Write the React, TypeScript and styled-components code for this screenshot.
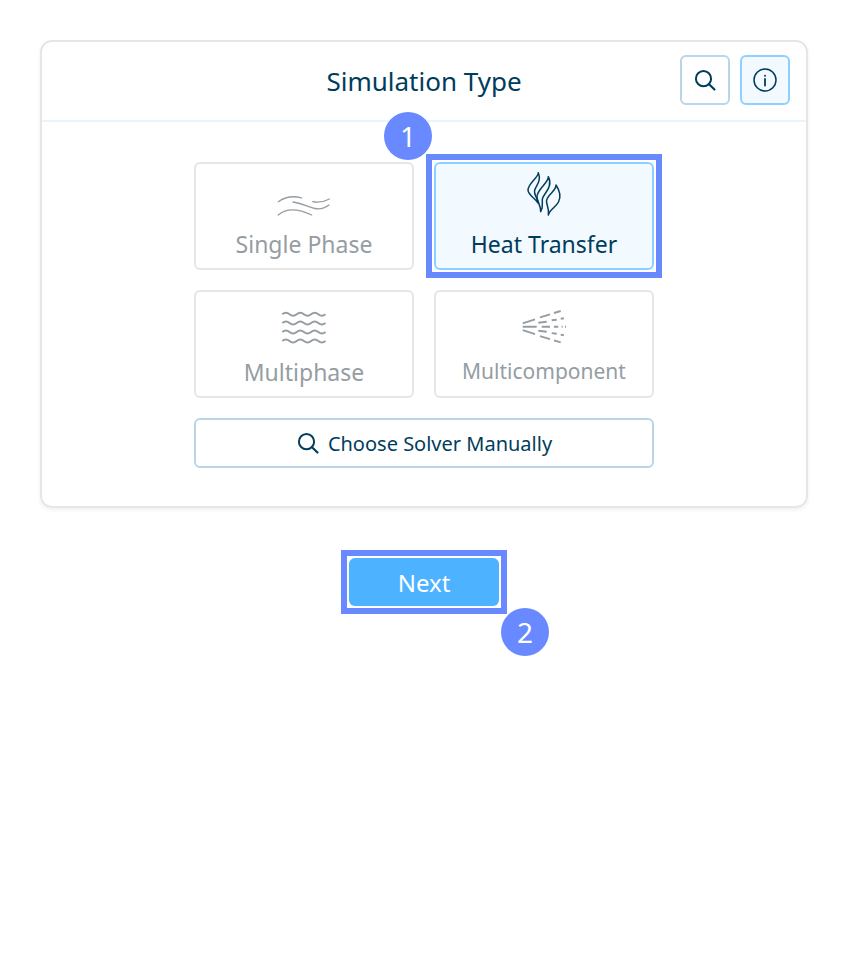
import React from "react";
import styled, { createGlobalStyle } from "styled-components";

const Global = createGlobalStyle`
  html, body { margin: 0; padding: 0; background: #fff; }
  body { font-family: "Noto Sans", "Open Sans", sans-serif; color: #003d5c; }
  * { box-sizing: border-box; }
`;

const Page = styled.div`
  width: 848px;
  min-height: 980px;
  padding: 40px;
  display: flex;
  flex-direction: column;
  align-items: center;
`;

const Card = styled.section`
  width: 768px;
  height: 468px;
  flex: none;
  border: 2px solid #e6e6e6;
  border-radius: 12px;
  box-shadow: 0 2px 4px rgba(0, 0, 0, 0.06);
  display: flex;
  flex-direction: column;
`;

const Header = styled.header`
  height: 80px;
  flex: none;
  padding: 13px 16px 0;
  border-bottom: 2px solid #e6f4fd;
  position: relative;
  display: flex;
  justify-content: flex-end;
  gap: 10px;
`;

const Title = styled.h1`
  position: absolute;
  left: 0;
  right: 0;
  top: 21px;
  margin: 0;
  text-align: center;
  font-size: 26px;
  line-height: 36px;
  font-weight: 400;
  color: #003d5c;
`;

const IconButton = styled.button<{ $active?: boolean }>`
  width: 50px;
  height: 50px;
  padding: 0;
  border: 2px solid ${(p) => (p.$active ? "#8ed0ff" : "#b9d5e6")};
  border-radius: 6px;
  background: ${(p) => (p.$active ? "#f2f9ff" : "#fff")};
  color: #003d5c;
  display: flex;
  align-items: center;
  justify-content: center;
`;

const Body = styled.div`
  padding-top: 40px;
  display: grid;
  grid-template-columns: 220px 220px;
  grid-template-rows: 108px 108px 50px;
  gap: 20px;
  justify-content: center;
`;

const Tile = styled.button<{ $active?: boolean }>`
  position: relative;
  width: 220px;
  height: 108px;
  padding: 8px 0 0;
  border: 2px solid ${(p) => (p.$active ? "#8ed0ff" : "#e6e6e6")};
  border-radius: 6px;
  background: ${(p) => (p.$active ? "#f2f9ff" : "#fff")};
  color: ${(p) => (p.$active ? "#003d5c" : "#959da3")};
  font-family: inherit;
  display: flex;
  flex-direction: column;
  align-items: center;
`;

const TileLabel = styled.span<{ $small?: boolean }>`
  margin-top: ${(p) => (p.$small ? 12 : 13)}px;
  font-size: ${(p) => (p.$small ? 21 : 23)}px;
  line-height: 30px;
`;

const TileIcon = styled.svg`
  width: 60px;
  height: 44px;
  flex: none;
  display: block;
  fill: none;
  stroke: currentColor;
  overflow: visible;
`;

const GlyphIcon = styled.svg`
  width: 24px;
  height: 24px;
  flex: none;
  display: block;
  fill: none;
  stroke: currentColor;
`;

const ManualButton = styled.button`
  grid-column: 1 / 3;
  height: 50px;
  border: 2px solid #b9d5e6;
  border-radius: 6px;
  background: #fff;
  color: #003d5c;
  font-family: inherit;
  font-size: 20px;
  display: flex;
  align-items: center;
  justify-content: center;
  gap: 8px;
`;

const Highlight = styled.span<{ $x: number; $y: number }>`
  position: absolute;
  top: -${(p) => p.$y}px;
  bottom: -${(p) => p.$y}px;
  left: -${(p) => p.$x}px;
  right: -${(p) => p.$x}px;
  border: 6px solid #6889ff;
  pointer-events: none;
`;

const Badge = styled.span<{ $left: number; $top: number }>`
  position: absolute;
  left: ${(p) => p.$left}px;
  top: ${(p) => p.$top}px;
  width: 48px;
  height: 48px;
  border-radius: 50%;
  background: #6889ff;
  color: #fff;
  font-size: 28px;
  line-height: 48px;
  text-align: center;
`;

const NextButton = styled.button`
  position: relative;
  margin-top: 50px;
  width: 150px;
  height: 48px;
  flex: none;
  border: none;
  border-radius: 6px;
  background: #4db2ff;
  color: #fff;
  font-family: inherit;
  font-size: 24px;
`;

const SearchIcon = () => (
  <GlyphIcon viewBox="0 0 24 24" strokeLinecap="round">
    <circle cx="10.5" cy="10.7" r="7.6" strokeWidth={2} />
    <path d="M16 16.2L21.5 21.5" strokeWidth={2.2} />
  </GlyphIcon>
);

const InfoIcon = () => (
  <GlyphIcon viewBox="0 0 24 24" strokeLinecap="round">
    <circle cx="12" cy="12" r="11" strokeWidth={1.5} />
    <circle cx="12" cy="7.8" r="1" fill="currentColor" stroke="none" />
    <path d="M12 11V17.6" strokeWidth={1.8} />
  </GlyphIcon>
);

const SinglePhaseIcon = () => (
  <TileIcon viewBox="0 0 60 44" strokeWidth={1.3} strokeLinecap="round">
    <path d="M4.3 29.7C11 25 19 23.5 27.7 26" />
    <path d="M19 30C27 31 34 35 41 36.5C46 37.5 51 36 55 33" />
    <path d="M38.7 29.7C44 30.8 50 30 55.3 27" />
    <path d="M4.3 43C10 38 20 34.5 37.7 43" />
  </TileIcon>
);

const HeatIcon = () => (
  <TileIcon viewBox="0 0 60 44" strokeWidth={1.5} strokeLinejoin="round">
    <path d="M24.3 .7C25 5 14 11 14 18C14 23 21 26 24.3 31.3C23.5 26 20 23 20.5 19C21 14 28 10 24.3 .7Z" />
    <path d="M34.3 4.7C35.5 10 23 17 23 24.7C23 30 27 33 26.7 39.7C30 34 27.5 30 28.5 26.5C30 21 39.5 15 34.3 4.7Z" />
    <path d="M42 13C42.5 19 32.5 23 32.5 29C32.5 33 35.5 37 34.3 43C36 37 42 35 44.5 30C47 25 46 19 42 13Z" />
  </TileIcon>
);

const waveY = [14.3, 23, 32, 41];
const MultiphaseIcon = () => (
  <TileIcon viewBox="0 0 60 44" strokeWidth={2}>
    {waveY.map((y) => (
      <path key={y} d={`M8.3 ${y}q3.6 -3 7.2 0t7.2 0t7.2 0t7.2 0t7.2 0t7.2 0`} />
    ))}
  </TileIcon>
);

const spray = [
  "M8.7 23.3L21 19.3M26 17.3L36 14.3M40 13L46.7 11",
  "M24.3 22.7L32.7 21.7M37.7 20.3L42.7 19.7M46.7 18.7L50 18.3",
  "M8.7 26.7H22.7M27.7 26.7H36M40 26.7H44.3M47.7 26.7H48.7M51 26.7H52",
  "M24.3 30.7L32.7 31.7M37.7 33.1L42.7 33.7M46.7 34.7L50 35.1",
  "M8.7 30.1L21 34.1M26 36.1L36 39.1M40 40.4L46.7 42.4",
];
const MulticomponentIcon = () => (
  <TileIcon viewBox="0 0 60 44" strokeWidth={1.9}>
    {spray.map((d) => (
      <path key={d} d={d} />
    ))}
  </TileIcon>
);

export default function App() {
  return (
    <>
      <Global />
      <Page>
        <Card>
          <Header>
            <Title>Simulation Type</Title>
            <IconButton aria-label="Search">
              <SearchIcon />
            </IconButton>
            <IconButton $active aria-label="Info">
              <InfoIcon />
            </IconButton>
          </Header>
          <Body>
            <Tile>
              <SinglePhaseIcon />
              <TileLabel>Single Phase</TileLabel>
            </Tile>
            <Tile $active>
              <HeatIcon />
              <TileLabel>Heat Transfer</TileLabel>
              <Highlight $x={10} $y={10} />
              <Badge $left={-52} $top={-52}>1</Badge>
            </Tile>
            <Tile>
              <MultiphaseIcon />
              <TileLabel>Multiphase</TileLabel>
            </Tile>
            <Tile>
              <MulticomponentIcon />
              <TileLabel $small>Multicomponent</TileLabel>
            </Tile>
            <ManualButton>
              <SearchIcon />
              Choose Solver Manually
            </ManualButton>
          </Body>
        </Card>
        <NextButton>
          Next
          <Highlight $x={8} $y={8} />
          <Badge $left={152} $top={50}>2</Badge>
        </NextButton>
      </Page>
    </>
  );
}
